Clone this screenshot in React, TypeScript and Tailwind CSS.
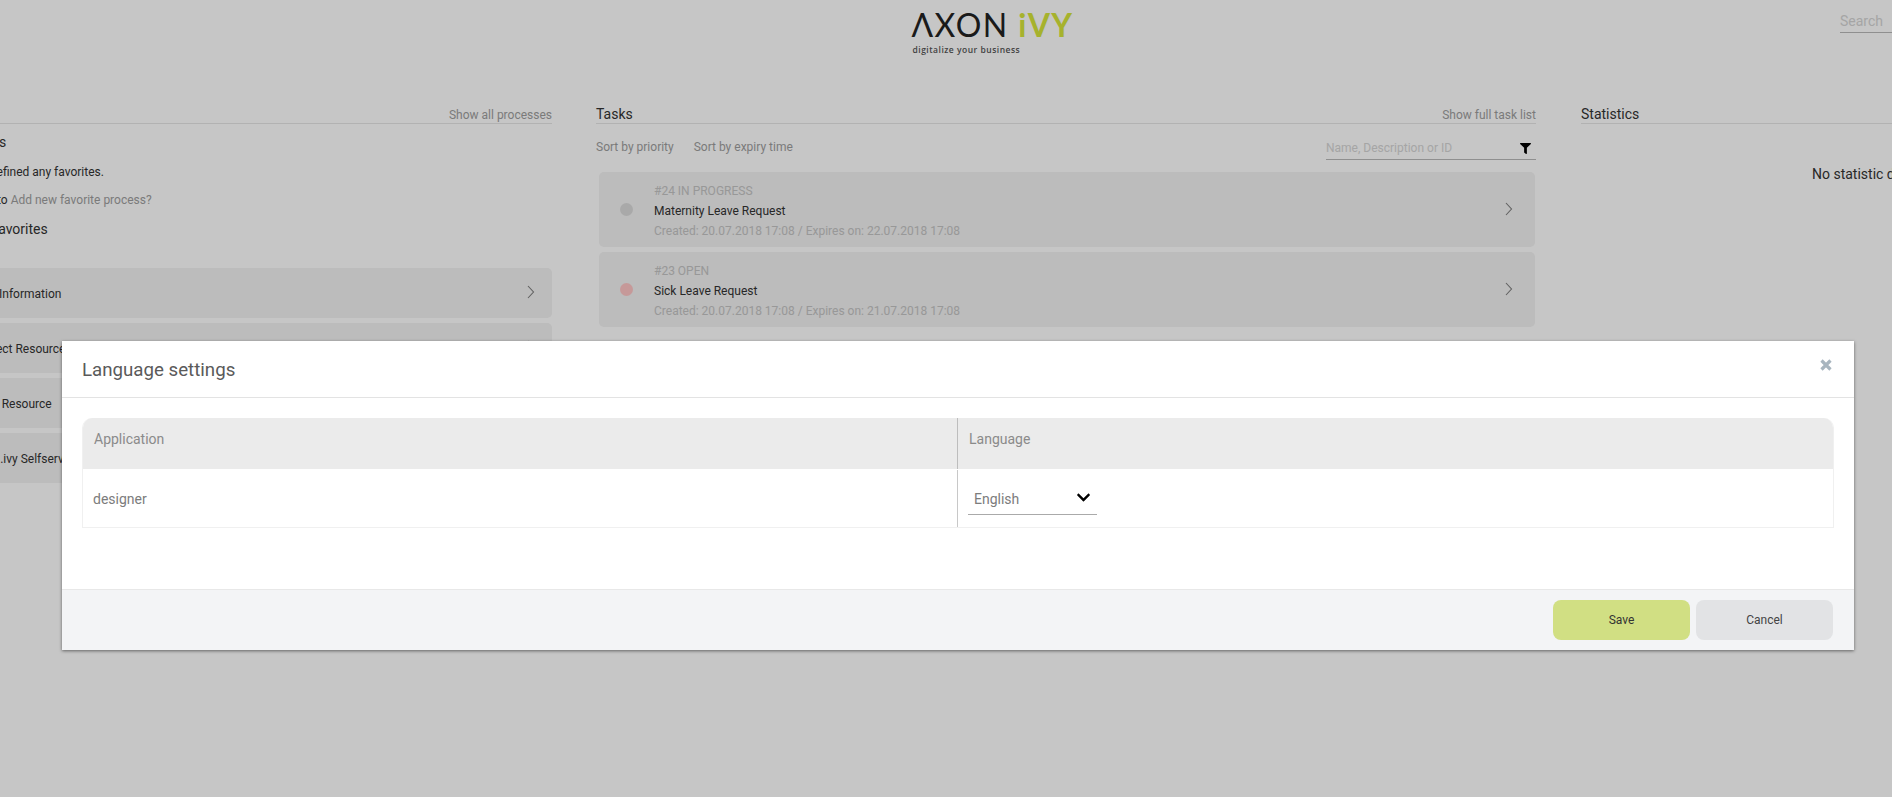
import { FaChevronDown, FaFilter } from "react-icons/fa";

function Chevron() {
  return (
    <svg width="8" height="14" viewBox="0 0 8 14" fill="none" className="mb-[2px] shrink-0">
      <polyline points="1,1 6.5,7 1,13" stroke="#7d7d7d" strokeWidth="1.1" />
    </svg>
  );
}

function SectionHead({ title, link }: { title: string; link?: string }) {
  return (
    <div className="flex h-[24px] items-center justify-between border-b border-[#e6e6e6] pt-[6px]">
      <span className="text-[14px] text-[#333]">{title}</span>
      {link && <span className="text-[12px] text-[#9e9e9e]">{link}</span>}
    </div>
  );
}

function ProcessCard({ label, pad }: { label: string; pad: string }) {
  return (
    <div className={`flex h-[50px] items-center justify-between rounded-[5px] bg-[#f2f2f2] pr-[17px] ${pad}`}>
      <span className="pt-[2px] text-[12px] text-[#333] whitespace-nowrap">{label}</span>
      <Chevron />
    </div>
  );
}

function TaskCard({ meta, name, dates, dot }: { meta: string; name: string; dates: string; dot: string }) {
  return (
    <div className="flex h-[75px] items-center rounded-[5px] bg-[#f2f2f2] pl-[21px] pr-[22px]">
      <span className={`h-[13px] w-[13px] shrink-0 rounded-full ${dot}`} />
      <div className="ml-[21px] flex flex-1 flex-col gap-[4px] pt-[2px] text-[12px] leading-[16px]">
        <span className="text-[#c4c4c4]">{meta}</span>
        <span className="text-[#333]">{name}</span>
        <span className="text-[#c4c4c4]">{dates}</span>
      </div>
      <Chevron />
    </div>
  );
}

export default function App() {
  return (
    <div className="relative h-[797px] w-[1892px] overflow-hidden bg-white font-['Roboto',sans-serif]">
      <header className="relative flex h-[100px] justify-center">
        <div className="ml-[93px] mt-[5px] flex flex-col">
          <div className="font-['Lato',sans-serif] text-[32px] font-normal leading-[40px] tracking-[1.4px] text-[#222] whitespace-nowrap">
            ΛXON <span className="font-bold text-[#d6e63a]">iVY</span>
          </div>
          <div className="mt-[-2px] pl-[1px] font-['Open_Sans',sans-serif] text-[8.5px] font-semibold leading-[14px] tracking-[0.5px] text-[#555] whitespace-nowrap">
            digitalize your business
          </div>
        </div>
        <div className="absolute left-[1840px] top-[12px] h-[21px] w-[60px] border-b border-[#b8b8b8] text-[14px] leading-[18px] text-[#d5d5d5]">
          Search
        </div>
      </header>

      <main className="ml-[-150px] flex w-[2300px] items-start">
        <section className="w-[702px] shrink-0">
          <SectionHead title="Processes" link="Show all processes" />
          <div className="mt-[8px] h-[20px] pl-[70px] text-[14px] leading-[20px] text-[#333]">Your favorites</div>
          <div className="mt-[12px] h-[16px] pl-[68px] text-[12px] leading-[16px] text-[#333] whitespace-nowrap">You have not defined any favorites.</div>
          <div className="mt-[12px] h-[16px] pl-[129px] text-[12px] leading-[16px] text-[#333] whitespace-nowrap">
            Go to <span className="text-[#9e9e9e]">Add new favorite process?</span>
          </div>
          <div className="mt-[11px] h-[20px] pl-[95px] text-[14px] leading-[20px] text-[#333]">Default favorites</div>
          <div className="mt-[29px] flex flex-col gap-[5px]">
            <ProcessCard label="Employee Information" pad="pl-[94px]" />
            <ProcessCard label="Request Project Resource" pad="pl-[78px]" />
            <ProcessCard label="Request Resource" pad="pl-[105px]" />
            <ProcessCard label="Axon.ivy Selfservice" pad="pl-[123px]" />
          </div>
        </section>

        <section className="ml-[44px] w-[940px] shrink-0">
          <SectionHead title="Tasks" link="Show full task list" />
          <div className="flex h-[48px] items-start justify-between pt-[14px]">
            <div className="flex gap-[20px] text-[12px] leading-[18px] text-[#9e9e9e]">
              <span>Sort by priority</span>
              <span>Sort by expiry time</span>
            </div>
            <div className="flex h-[22px] w-[210px] items-start justify-between border-b border-[#b8b8b8] pr-[5px] pt-[1px] text-[12px] leading-[18px] text-[#d5d5d5]">
              <span>Name, Description or ID</span>
              <FaFilter className="mt-[4px] text-[11px] text-black" />
            </div>
          </div>
          <div className="ml-[3px] mr-[1px] flex flex-col gap-[5px]">
            <TaskCard meta="#24 IN PROGRESS" name="Maternity Leave Request" dates="Created: 20.07.2018 17:08 / Expires on: 22.07.2018 17:08" dot="bg-[#dadada]" />
            <TaskCard meta="#23 OPEN" name="Sick Leave Request" dates="Created: 20.07.2018 17:08 / Expires on: 21.07.2018 17:08" dot="bg-[#ffc6c6]" />
          </div>
        </section>

        <section className="ml-[45px] w-[500px] shrink-0">
          <SectionHead title="Statistics" />
          <div className="mt-[40px] pl-[231px] text-[14px] leading-[20px] text-[#333] whitespace-nowrap">No statistic data</div>
        </section>
      </main>

      <div className="absolute inset-0 bg-black/[.224]" />

      <div className="absolute left-[62px] top-[341px] flex h-[309px] w-[1792px] flex-col bg-white shadow-[0_1px_3px_rgba(0,0,0,0.5)]">
        <div className="flex h-[57px] items-start justify-between border-b border-[#e3e3e3] pl-[20px] pr-[22px]">
          <h2 className="mt-[17px] text-[18.7px] leading-[24px] text-[#5a5a5a]">Language settings</h2>
          <svg width="12" height="12" viewBox="0 0 12 12" className="mt-[18px]">
            <path d="M1.5 1.5 L10.5 10.5 M10.5 1.5 L1.5 10.5" stroke="#a8b5bf" strokeWidth="3.2" />
          </svg>
        </div>
        <div className="flex-1 px-[20px] pt-[20px]">
          <div className="w-[1752px] overflow-hidden rounded-t-[10px] border border-t-0 border-[#f0f0f0]">
            <div className="flex h-[52px] border-b border-white bg-[#ebebeb] text-[14px] leading-[20px] text-[#8a8a8a]">
              <div className="w-[875px] border-r border-[#bdbdbd] pl-[11px] pt-[11px]">Application</div>
              <div className="pl-[11px] pt-[11px]">Language</div>
            </div>
            <div className="flex h-[57px] text-[14px] leading-[20px] text-[#7c7c7c]">
              <div className="flex w-[875px] items-center border-r border-[#c8c8c8] pl-[10px] pt-[1px]">designer</div>
              <div className="ml-[10px] mt-[7px] flex h-[38px] w-[129px] items-start justify-between border-b border-[#aaaaaa] pl-[6px] pr-[6px] pt-[12px]">
                <span>English</span>
                <FaChevronDown className="mt-[1px] text-[15px] text-black" />
              </div>
            </div>
          </div>
        </div>
        <div className="flex h-[61px] items-start justify-end gap-[6px] border-t border-[#e8e8e8] bg-[#f3f4f6] pr-[21px] pt-[10px] text-[12px]">
          <button className="h-[40px] w-[137px] rounded-[8px] bg-[#d1df83] text-[#333]">Save</button>
          <button className="h-[40px] w-[137px] rounded-[8px] bg-[#e2e3e5] text-[#444]">Cancel</button>
        </div>
      </div>
    </div>
  );
}
